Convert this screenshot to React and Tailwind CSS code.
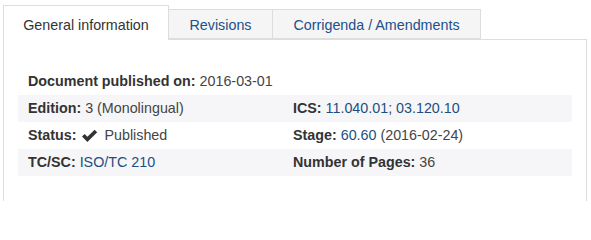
import React from "react";

const font = { fontFamily: '"Liberation Sans", Arial, sans-serif' };

function Row({ striped, left, right }) {
  return (
    <div className={`grid grid-cols-[265px_1fr] h-[27px] items-center ${striped ? "bg-[#f6f6f8]" : ""}`}>
      <div className="pl-[10px] whitespace-nowrap">{left}</div>
      <div className="pl-[10px] whitespace-nowrap">{right}</div>
    </div>
  );
}

const L = ({ children }) => <span className="font-bold text-[#333]">{children}</span>;
const A = ({ children }) => <span className="text-[#1c4f80]">{children}</span>;

export default function App() {
  return (
    <div className="w-[591px] h-[201px] bg-white overflow-hidden text-[14.3px] text-[#444]" style={font}>
      <div className="pl-[3px] pt-[5px] flex items-end">
        <div className="w-[166px] h-[35px] pt-[5px] border border-b-0 border-[#ddd] bg-white flex items-center justify-center text-[14.3px] text-[#333] relative z-10 -mb-px">
          General information
        </div>
        <div className="w-[104px] h-[30px] pt-[3px] border border-l-0 border-[#ddd] bg-[#f5f5f5] flex items-center justify-center text-[14.3px] text-[#21508a]">
          Revisions
        </div>
        <div className="w-[208px] h-[30px] pt-[3px] border border-l-0 border-[#ddd] bg-[#f5f5f5] flex items-center justify-center text-[14.3px] text-[#21508a]">
          Corrigenda / Amendments
        </div>
      </div>
      <div className="ml-[3px] w-[584px] h-[300px] border border-[#ddd] px-[14px] pt-[28px]">
        <Row left={<><L>Document published on:</L> 2016-03-01</>} right={null} />
        <Row striped left={<><L>Edition:</L> 3 (Monolingual)</>} right={<><L>ICS:</L> <A>11.040.01</A>; <A>03.120.10</A></>} />
        <Row
          left={
            <span className="inline-flex items-center">
              <L>Status:</L>
              <svg className="ml-[5px] mr-[6px]" width="17" height="14" viewBox="0 0 17 14">
                <path d="M1 7.5 L3.6 5 L6.4 7.8 L13.6 0.8 L16.2 3.3 L6.4 13 Z" fill="#333" />
              </svg>
              Published
            </span>
          }
          right={<><L>Stage:</L> <A>60.60</A> (2016-02-24)</>}
        />
        <Row striped left={<><L>TC/SC:</L> <A>ISO/TC 210</A></>} right={<><L>Number of Pages:</L> 36</>} />
      </div>
    </div>
  );
}
